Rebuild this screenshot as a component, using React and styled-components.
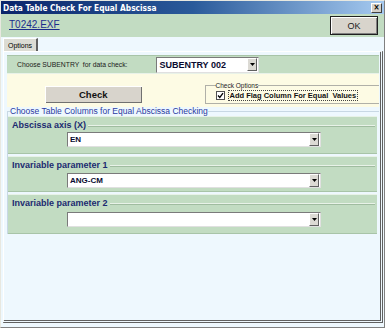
import React from "react";
import styled, { createGlobalStyle } from "styled-components";

const Global = createGlobalStyle`
  html, body { margin: 0; padding: 0; background: #d4d0c8; }
  body { font-family: "Liberation Sans", Arial, sans-serif; }
`;

const Window = styled.div`
  width: 385px;
  height: 328px;
  box-sizing: border-box;
  background: #eef8fe;
  border: 1px solid #808080;
  border-left-color: #e8e8e0;
  border-top-color: #e8e8e0;
  display: flex;
  flex-direction: column;
  overflow: hidden;
`;

const TitleBar = styled.div`
  height: 13px;
  flex: none;
  display: flex;
  align-items: center;
  justify-content: space-between;
  padding: 0 2px 0 2px;
  background: linear-gradient(to right, #0a246a 0%, #2a5a9a 50%, #a6caf0 100%);
  color: #fff;
  font-family: "DejaVu Sans Condensed", "DejaVu Sans", sans-serif;
  font-weight: bold;
  font-size: 8.3px;
`;

const CloseBox = styled.div`
  width: 9px;
  height: 8px;
  background: #d4d0c8;
  border: 1px solid #fff;
  border-right-color: #404040;
  border-bottom-color: #404040;
  display: flex;
  align-items: center;
  justify-content: center;
  color: #000;
  font-size: 8px;
  font-weight: bold;
  line-height: 1;
`;

const Header = styled.div`
  height: 23px;
  flex: none;
  display: flex;
  align-items: center;
  justify-content: space-between;
  padding: 0 6px 2px 8px;
  box-sizing: border-box;
  background: #c2dcc2;
`;

const FileLink = styled.a`
  color: #1c2c8c;
  font-size: 10px;
  text-decoration: underline;
`;

const OkButton = styled.button`
  width: 48px;
  height: 19px;
  padding: 0;
  margin-top: 2px;
  background: #d8d4cc;
  border: 1px solid #202020;
  box-shadow: inset 1px 1px 0 #fff, inset -1px -1px 0 #808080;
  font-family: "Liberation Sans", Arial, sans-serif;
  font-size: 9px;
  color: #202020;
`;

const TabStrip = styled.div`
  height: 14px;
  flex: none;
  display: flex;
  align-items: flex-end;
  padding-left: 2px;
`;

const Tab = styled.div`
  height: 12px;
  padding: 0 4px;
  display: flex;
  align-items: center;
  background: #dcdcd4;
  border: 1px solid #fff;
  border-right: 2px solid #606060;
  border-bottom: none;
  font-size: 7px;
  color: #000;
`;

const TabPanel = styled.div`
  flex: 1;
  margin: 0 1px 4px 2px;
  border: 1px solid #fff;
  border-right: 3px double #606060;
  border-bottom: 3px double #606060;
  padding: 3px 1px 0 3px;
  display: flex;
  flex-direction: column;
  background: #eef8fe;
`;

const SubentryRow = styled.div`
  height: 17px;
  display: flex;
  align-items: center;
  gap: 29px;
  padding-left: 10px;
  background: #c2dcc2;
  border-top: 1px solid #a8c4a8;
  border-bottom: 1px solid #e8f2e8;
`;

const Caption = styled.span`
  font-size: 6.8px;
  color: #1a1a1a;
  white-space: pre;
`;

const Combo = styled.div`
  width: ${(p) => p.$width}px;
  height: ${(p) => p.$height}px;
  box-sizing: border-box;
  display: flex;
  align-items: center;
  justify-content: space-between;
  background: #fff;
  border: 1px solid #7a7a7a;
  border-right-color: #e0e0e0;
  border-bottom-color: #e0e0e0;
  padding: 0 1px 0 2px;
  font-weight: bold;
  font-size: ${(p) => p.$font}px;
  color: #0a0a30;
`;

const Arrow = styled.div`
  width: 8px;
  height: 11px;
  background: #dcdad4;
  border: 1px solid #fff;
  border-right-color: #606060;
  border-bottom-color: #606060;
  display: flex;
  align-items: center;
  justify-content: center;
`;

const CheckRow = styled.div`
  height: 33px;
  box-sizing: border-box;
  display: flex;
  align-items: flex-end;
  padding: 0 0 3px 38px;
  background: #fdfbe4;
`;

const CheckButton = styled.button`
  width: 98px;
  height: 17px;
  margin-bottom: 1px;
  padding: 0;
  background: #d8d4cc;
  border: none;
  box-shadow: inset 1px 1px 0 #fff, inset -1px -1px 0 #707070;
  font-family: "Liberation Sans", Arial, sans-serif;
  font-weight: bold;
  font-size: 9.5px;
  color: #111;
`;

const OptionsBox = styled.fieldset`
  margin: 0 0 0 63px;
  width: 177px;
  height: 22px;
  box-sizing: border-box;
  padding: 0 0 1px 10px;
  border: 1px solid #b0b0a8;
  border-right: none;
  display: flex;
  align-items: center;
  gap: 3px;
`;

const SmallLegend = styled.legend`
  padding: 0;
  font-size: 6.5px;
  color: #222;
  line-height: 7px;
`;

const CheckBox = styled.div`
  width: 7px;
  height: 7px;
  border: 1px solid #505050;
  background: #fff;
  display: flex;
  align-items: center;
  justify-content: center;
`;

const CheckLabel = styled.span`
  font-weight: bold;
  font-size: 7.5px;
  color: #111;
  border: 1px dotted #444;
  padding: 0 1px;
  white-space: pre;
`;

const ColumnsBox = styled.fieldset`
  margin: 0;
  padding: 0;
  border: none;
  border-top: 1px solid #c8d8e4;
  border-left: 1px solid #c8d8e4;
  display: flex;
  flex-direction: column;
  gap: 2px;
`;

const ColumnsLegend = styled.legend`
  padding: 0;
  margin-left: 2px;
  font-size: 8.5px;
  color: #2a3aa0;
  line-height: 9px;
`;

const ParamGroup = styled.fieldset`
  margin: 0 2px 0 0;
  height: ${(p) => p.$height}px;
  box-sizing: border-box;
  padding: 2px 0 0 59px;
  background: #c2dcc2;
  border: none;
  border-top: 1px solid #e8f2e8;
  border-bottom: 1px solid #a8c4a8;
  position: relative;
`;

const ParamLegend = styled.legend`
  position: absolute;
  top: 3px;
  left: 2px;
  padding-right: 2px;
  font-weight: bold;
  font-size: 9px;
  color: #1c2a70;
  background: #c2dcc2;
`;

const GroupRule = styled.div`
  position: absolute;
  top: 8px;
  left: 2px;
  right: 2px;
  border-top: 1px solid #e8f2e8;
  border-bottom: 1px solid #a0bca0;
`;

const ComboSlot = styled.div`
  padding-top: ${(p) => p.$top}px;
`;

function DropArrow() {
  return (
    <Arrow>
      <svg width="5" height="3" viewBox="0 0 5 3">
        <path d="M0 0h5L2.5 3z" fill="#000" />
      </svg>
    </Arrow>
  );
}

function ParamSelect({ label, value, height, top }) {
  return (
    <ParamGroup $height={height}>
      <GroupRule />
      <ParamLegend>{label}</ParamLegend>
      <ComboSlot $top={top}>
        <Combo $width={254} $height={15} $font={8}>
          <span>{value}</span>
          <DropArrow />
        </Combo>
      </ComboSlot>
    </ParamGroup>
  );
}

export default function App() {
  return (
    <>
      <Global />
      <Window>
        <TitleBar>
          <span>Data Table Check For Equal Abscissa</span>
          <CloseBox>×</CloseBox>
        </TitleBar>
        <Header>
          <FileLink>T0242.EXF</FileLink>
          <OkButton>OK</OkButton>
        </Header>
        <TabStrip>
          <Tab>Options</Tab>
        </TabStrip>
        <TabPanel>
          <SubentryRow>
            <Caption>Choose SUBENTRY  for data check:</Caption>
            <Combo $width={103} $height={16} $font={9}>
              <span>SUBENTRY 002</span>
              <DropArrow />
            </Combo>
          </SubentryRow>
          <CheckRow>
            <CheckButton>Check</CheckButton>
            <OptionsBox>
              <SmallLegend>Check Options</SmallLegend>
              <CheckBox>
                <svg width="7" height="7" viewBox="0 0 7 7">
                  <path d="M1 3.5l1.8 2L6 1.2" fill="none" stroke="#000" strokeWidth="1.3" />
                </svg>
              </CheckBox>
              <CheckLabel>Add Flag Column For Equal  Values</CheckLabel>
            </OptionsBox>
          </CheckRow>
          <ColumnsBox>
            <ColumnsLegend>Choose Table Columns for Equal Abscissa Checking</ColumnsLegend>
            <ParamSelect label="Abscissa axis (X)" value="EN" height={38} top={13} />
            <ParamSelect label="Invariable parameter 1" value="ANG-CM" height={36} top={14} />
            <ParamSelect label="Invariable parameter 2" value="" height={40} top={15} />
          </ColumnsBox>
        </TabPanel>
      </Window>
    </>
  );
}
